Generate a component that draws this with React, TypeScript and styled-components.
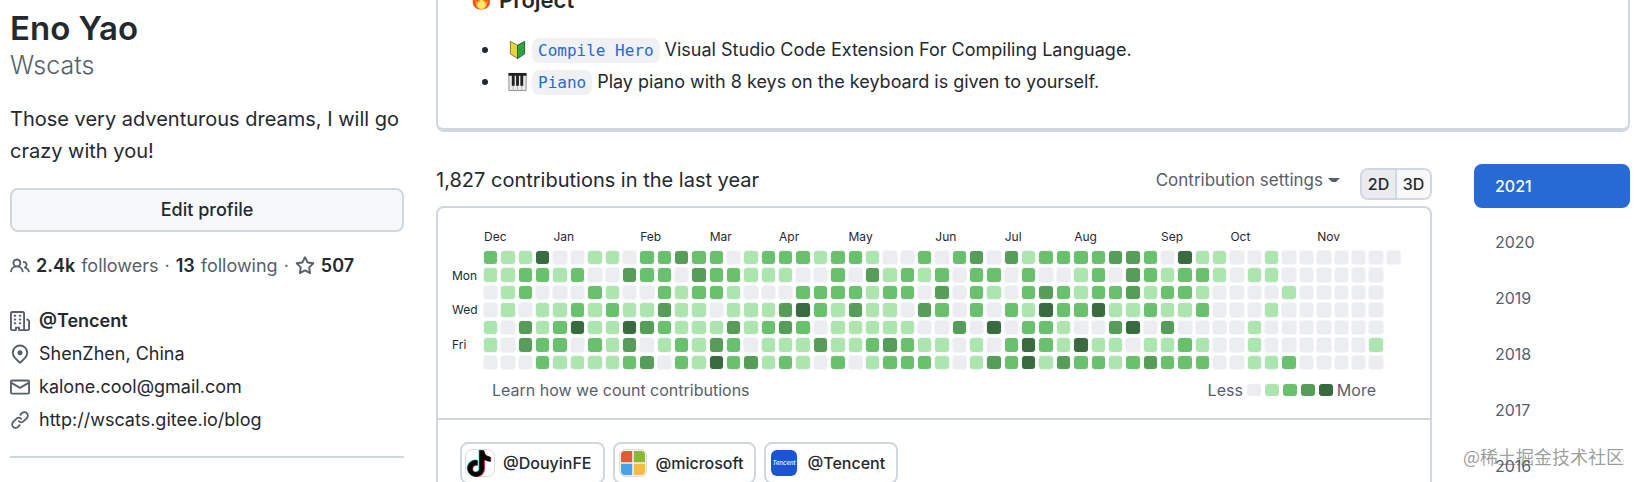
import React from "react";
import styled, { createGlobalStyle } from "styled-components";

const color = {
  text: "#24292f",
  muted: "#57606a",
  border: "#d0d7de",
  subtle: "#f6f8fa",
  blue: "#286ad3",
};

const LEVELS = ["#ebedf0", "#ace6ae", "#69c16e", "#559d58", "#386c3e"];

/* One string per weekday, one digit (activity level) per week */
const DAYS = [
  "21140011022322012221221002023031222233204110010000000",
  "1122120032203221110020312120220200120321221011000000",
  "0120002100212210002222122030210232122312210000100000",
  "0101121211311011134213110320202142241121120001000000",
  "1031241143211131232011111003040221003403000010000000",
  "1032202130121320111311232110102421411011210010000001",
  "0002111123021423121020122210132413221232220011200000",
];

const MONTHS: [string, number][] = [
  ["Dec", 1], ["Jan", 5], ["Feb", 10], ["Mar", 14], ["Apr", 18], ["May", 22],
  ["Jun", 27], ["Jul", 31], ["Aug", 35], ["Sep", 40], ["Oct", 44], ["Nov", 49],
];

const WEEKDAYS = ["", "Mon", "", "Wed", "", "Fri", ""];
const YEARS = [2021, 2020, 2019, 2018, 2017, 2016];

const GlobalStyle = createGlobalStyle`
  *, *::before, *::after { box-sizing: border-box; }
  body {
    margin: 0;
    background: #fff;
    color: ${color.text};
    font-family: Inter, "Liberation Sans", sans-serif;
    font-size: 18px;
    line-height: 32px;
  }
  h1, h2, h3, p, ul { margin: 0; padding: 0; }
  ul { list-style: none; }
  a { color: inherit; text-decoration: none; }
  button { font: inherit; color: inherit; cursor: pointer; }
`;

const Page = styled.div`
  position: relative;
  display: flex;
  gap: 32px;
  height: 100vh;
  padding: 0 10px;
  overflow: hidden;
`;

const Sidebar = styled.aside`
  flex: 0 0 394px;
  padding-top: 8px;
`;

const FullName = styled.h1`
  font-size: 33px;
  line-height: 40px;
  font-weight: 600;
`;

const Login = styled.p`
  font-size: 25px;
  line-height: 34px;
  font-weight: 300;
  color: ${color.muted};
`;

const Bio = styled.p`
  margin-top: 21px;
  font-size: 20px;
  line-height: 32px;
`;

const EditButton = styled.button`
  display: block;
  width: 100%;
  height: 44px;
  margin-top: 21px;
  padding: 0;
  border: 2px solid ${color.border};
  border-radius: 8px;
  background: ${color.subtle};
  font-weight: 500;
`;

const Stats = styled.div`
  display: flex;
  align-items: center;
  gap: 6px;
  margin-top: 18px;
  color: ${color.muted};
  white-space: nowrap;

  b { color: ${color.text}; font-weight: 600; }
`;

const StatLink = styled.a`
  display: flex;
  align-items: center;
  gap: 6px;
`;

const Details = styled.ul`
  display: grid;
  gap: 1px;
  margin-top: 23px;
  padding-bottom: 20px;
  border-bottom: 2px solid ${color.border};
`;

const Detail = styled.li<{ $strong?: boolean }>`
  display: flex;
  align-items: center;
  gap: 9px;
  font-weight: ${(p) => (p.$strong ? 600 : 400)};
`;

const Icon = styled.svg`
  flex: none;
  width: 20px;
  height: 20px;
  fill: ${color.muted};
`;

const Main = styled.main`
  flex: 1;
  min-width: 0;
`;

const Readme = styled.section`
  margin-top: -16px;
  border: 2px solid ${color.border};
  border-top: 0;
  border-radius: 0 0 8px 8px;
`;

const ReadmeBody = styled.div`
  padding: 0 32px 30px;
  border-bottom: 2px solid ${color.border};
  border-radius: 0 0 6px 6px;
`;

const ReadmeTitle = styled.h3`
  display: flex;
  align-items: center;
  gap: 8px;
  padding-left: 2px;
  font-size: 22px;
  line-height: 32px;
  font-weight: 600;
`;

const ProjectList = styled.ul`
  margin-top: 18px;
`;

const Project = styled.li`
  display: flex;
  align-items: center;
  gap: 5px;

  &::before {
    content: "";
    width: 6px;
    height: 6px;
    margin: 0 15px 0 12px;
    border-radius: 50%;
    background: ${color.text};
  }
`;

const CodeLink = styled.a`
  padding: 0 6px;
  border-radius: 8px;
  background: #eff1f3;
  color: ${color.blue};
  font-family: "DejaVu Sans Mono", monospace;
  font-size: 16px;
  line-height: 25px;
`;

const Emoji = styled.svg`
  flex: none;
  width: 19px;
  height: 20px;
`;

const Activity = styled.div`
  display: flex;
  gap: 42px;
  margin-top: 32px;
`;

const Contributions = styled.section`
  flex: 1;
  min-width: 0;
`;

const Header = styled.header`
  display: flex;
  align-items: center;
  justify-content: space-between;
  height: 42px;
  padding-bottom: 10px;
`;

const Heading = styled.h2`
  font-size: 20px;
  line-height: 32px;
  font-weight: 400;
`;

const Controls = styled.div`
  display: flex;
  align-items: center;
  gap: 20px;
`;

const SettingsButton = styled.button`
  display: flex;
  align-items: center;
  gap: 5px;
  padding: 0;
  border: 0;
  background: none;
  color: ${color.muted};
  font-size: 17px;
  line-height: 24px;
`;

const Toggle = styled.div`
  display: flex;
  height: 32px;
  margin-top: 8px;
  border: 2px solid ${color.border};
  border-radius: 8px;
  overflow: hidden;
`;

const ToggleButton = styled.button<{ $active?: boolean }>`
  width: 33px;
  padding: 0;
  border: 0;
  background: ${(p) => (p.$active ? "#ebecf0" : color.subtle)};
  font-size: 16px;
  line-height: 24px;
  font-weight: 500;

  & + & { width: 35px; border-left: 2px solid ${color.border}; }
`;

const Card = styled.div`
  border: 2px solid ${color.border};
  border-radius: 8px 8px 0 0;
`;

const Calendar = styled.div`
  display: grid;
  grid-template-columns: 32px 1fr;
  padding: 20px 30px 9px 14px;
`;

const MonthRow = styled.div`
  grid-column: 2;
  display: grid;
  grid-template-columns: repeat(53, minmax(0, 1fr));
  column-gap: 4px;
  height: 23px;
  font-size: 12px;
  line-height: 18px;
`;

const Month = styled.span<{ $week: number }>`
  grid-column-start: ${(p) => p.$week};
  grid-row: 1;
  white-space: nowrap;
`;

const WeekdayColumn = styled.div`
  display: grid;
  grid-template-rows: repeat(7, minmax(0, 1fr));
  align-items: center;
  row-gap: 4px;
  font-size: 12px;
  line-height: 13px;
`;

const DayGrid = styled.div`
  display: grid;
  grid-template-columns: repeat(53, minmax(0, 1fr));
  grid-template-rows: repeat(7, minmax(0, 1fr));
  gap: 4px;
  height: 118px;
`;

const Day = styled.span<{ $level: number; $row: number }>`
  grid-row: ${(p) => p.$row};
  border-radius: 3px;
  background: ${(p) => LEVELS[p.$level]};
  box-shadow: 0 0 0 1px #f4f5f6;
`;

const CalendarFooter = styled.div`
  display: flex;
  justify-content: space-between;
  padding: 0 54px 16px;
  color: ${color.muted};
  font-size: 16px;
  line-height: 24px;
`;

const Legend = styled.div`
  display: flex;
  align-items: center;
  gap: 4px;
`;

const Swatch = styled.span<{ $level: number }>`
  width: 14px;
  height: 12px;
  border-radius: 3px;
  background: ${(p) => LEVELS[p.$level]};
`;

const Orgs = styled.div`
  display: flex;
  gap: 8px;
  padding: 22px;
  border-top: 2px solid ${color.border};
`;

const OrgLink = styled.a`
  display: flex;
  align-items: center;
  gap: 8px;
  height: 42px;
  padding: 0 11px 0 3px;
  border: 2px solid ${color.border};
  border-radius: 8px;
  font-size: 16px;
  font-weight: 500;
`;

const OrgLogo = styled.svg`
  width: 30px;
  height: 30px;
`;

const Years = styled.nav`
  display: flex;
  flex: 0 0 156px;
  flex-direction: column;
  gap: 12px;
`;

const YearLink = styled.a<{ $active?: boolean }>`
  height: 44px;
  padding: 0 21px;
  border-radius: 8px;
  background: ${(p) => (p.$active ? color.blue : "transparent")};
  color: ${(p) => (p.$active ? "#fff" : color.muted)};
  font-size: 16px;
  line-height: 44px;
  font-weight: ${(p) => (p.$active ? 500 : 400)};
`;

const Watermark = styled.span`
  position: absolute;
  right: 16px;
  bottom: 14px;
  color: rgba(90, 90, 90, 0.6);
  font-family: "Noto Sans CJK SC", sans-serif;
  font-size: 18px;
  line-height: 24px;
`;

const ICONS = {
  people:
    "M5.5 3.5a2 2 0 100 4 2 2 0 000-4zM2 5.5a3.5 3.5 0 115.898 2.549 5.507 5.507 0 013.034 4.084.75.75 0 11-1.482.235 4.001 4.001 0 00-7.9 0 .75.75 0 01-1.482-.236A5.507 5.507 0 013.102 8.05 3.49 3.49 0 012 5.5zM11 4a.75.75 0 100 1.5 1.5 1.5 0 01.666 2.844.75.75 0 00-.416.672v.352a.75.75 0 00.574.73c1.2.289 2.162 1.2 2.522 2.372a.75.75 0 101.434-.44 5.01 5.01 0 00-2.56-3.012A3 3 0 0011 4z",
  star:
    "M8 .25a.75.75 0 01.673.418l1.882 3.815 4.21.612a.75.75 0 01.416 1.279l-3.046 2.97.719 4.192a.75.75 0 01-1.088.791L8 12.347l-3.766 1.98a.75.75 0 01-1.088-.79l.72-4.194L.818 6.374a.75.75 0 01.416-1.28l4.21-.611L7.327.668A.75.75 0 018 .25zm0 2.445L6.615 5.5a.75.75 0 01-.564.41l-3.097.45 2.24 2.184a.75.75 0 01.216.664l-.528 3.084 2.769-1.456a.75.75 0 01.698 0l2.77 1.456-.53-3.084a.75.75 0 01.216-.664l2.24-2.183-3.096-.45a.75.75 0 01-.564-.41L8 2.694v.001z",
  organization:
    "M1.5 14.25c0 .138.112.25.25.25H4v-1.25a.75.75 0 01.75-.75h2.5a.75.75 0 01.75.75v1.25h2.25a.25.25 0 00.25-.25V1.75a.25.25 0 00-.25-.25h-8.5a.25.25 0 00-.25.25v12.5zM1.75 16A1.75 1.75 0 010 14.25V1.75C0 .784.784 0 1.75 0h8.5C11.216 0 12 .784 12 1.75v12.5c0 .085-.006.168-.018.25h2.268a.25.25 0 00.25-.25V8.285a.25.25 0 00-.111-.208l-1.055-.703a.75.75 0 11.832-1.248l1.055.703c.487.325.779.871.779 1.456v5.965A1.75 1.75 0 0114.25 16h-3.5a.75.75 0 01-.197-.026c-.099.017-.2.026-.303.026h-3a.75.75 0 01-.75-.75V14h-1v1.25a.75.75 0 01-.75.75h-3zM3 3.75A.75.75 0 013.75 3h.5a.75.75 0 010 1.5h-.5A.75.75 0 013 3.75zM3.75 6a.75.75 0 000 1.5h.5a.75.75 0 000-1.5h-.5zM3 9.75A.75.75 0 013.75 9h.5a.75.75 0 010 1.5h-.5A.75.75 0 013 9.75zM7.75 9a.75.75 0 000 1.5h.5a.75.75 0 000-1.5h-.5zM7 6.75A.75.75 0 017.75 6h.5a.75.75 0 010 1.5h-.5A.75.75 0 017 6.75zM7.75 3a.75.75 0 000 1.5h.5a.75.75 0 000-1.5h-.5z",
  location:
    "M11.536 3.464a5 5 0 010 7.072L8 14.07l-3.536-3.535a5 5 0 117.072-7.072v.001zm1.06 8.132a6.5 6.5 0 10-9.192 0l3.535 3.536a1.5 1.5 0 002.122 0l3.535-3.536zM8 9a2 2 0 100-4 2 2 0 000 4z",
  mail:
    "M1.75 2A1.75 1.75 0 000 3.75v.736a.75.75 0 000 .027v7.737C0 13.216.784 14 1.75 14h12.5A1.75 1.75 0 0016 12.25v-8.5A1.75 1.75 0 0014.25 2H1.75zM14.5 4.07v-.32a.25.25 0 00-.25-.25H1.75a.25.25 0 00-.25.25v.32L8 7.88l6.5-3.81zm-13 1.74v6.441c0 .138.112.25.25.25h12.5a.25.25 0 00.25-.25V5.809L8.38 9.397a.75.75 0 01-.76 0L1.5 5.809v.001z",
  link:
    "M7.775 3.275a.75.75 0 001.06 1.06l1.25-1.25a2 2 0 112.83 2.83l-2.5 2.5a2 2 0 01-2.83 0 .75.75 0 00-1.06 1.06 3.5 3.5 0 004.95 0l2.5-2.5a3.5 3.5 0 00-4.95-4.95l-1.25 1.25zm-4.69 9.64a2 2 0 010-2.83l2.5-2.5a2 2 0 012.83 0 .75.75 0 001.06-1.06 3.5 3.5 0 00-4.95 0l-2.5 2.5a3.5 3.5 0 004.95 4.95l1.25-1.25a.75.75 0 00-1.06-1.06l-1.25 1.25a2 2 0 01-2.83 0z",
};

const Octicon = ({ name }: { name: keyof typeof ICONS }) => (
  <Icon viewBox="0 0 16 16" aria-hidden="true">
    <path fillRule="evenodd" d={ICONS[name]} />
  </Icon>
);

const Fire = () => (
  <Emoji viewBox="0 0 20 20" aria-hidden="true">
    <path fill="#f4511e" d="M10 0c1 4 6 5 7 9 1 0 1-1 1-2 2 6 1 13-8 13S-1 13 2 6c0 2 1 3 2 3C5 6 10 4 10 0z" />
    <path fill="#fb9a1c" d="M10 5c1 3 4 4 4 7 1 0 2-1 2-2 1 5-1 9.500-6 9.500S3 15 4 10c1 1 1 2 2 2 0-3 4-4 4-7z" />
    <path fill="#ffe96b" d="M10 8c0 3 4.500 4 4.500 7.500 0 2-2 4-4.500 4s-4.500-2-4.500-4C5.500 12 10 11 10 8z" />
  </Emoji>
);

const Beginner = () => (
  <Emoji viewBox="0 0 20 20" aria-hidden="true">
    <path fill="#e5d53a" stroke="#7a7a2a" strokeWidth="1" d="M2.500 1L10 5v14l-7.500-5z" />
    <path fill="#2fa344" stroke="#1d5c2a" strokeWidth="1" d="M17.500 1L10 5v14l7.500-5z" />
  </Emoji>
);

const Keys = () => (
  <Emoji viewBox="0 0 20 20" aria-hidden="true">
    <path fill="#ececec" stroke="#8c8c8c" strokeWidth="1" d="M1 1h18v18H1z" />
    <path stroke="#b4b4b4" strokeWidth="1" d="M5.500 13v6M10 13v6M14.500 13v6" />
    <path fill="#222" d="M.5.500h19v3H.5zM4 3h3v11H4zM8.500 3h3v11h-3zM13 3h3v11h-3z" />
  </Emoji>
);

const NOTE =
  "M12.525.02c1.31-.02 2.61-.01 3.91-.02.08 1.53.63 3.09 1.75 4.17 1.12 1.11 2.7 1.62 4.24 1.79v4.03c-1.44-.05-2.89-.35-4.2-.97-.57-.26-1.1-.59-1.62-.93-.01 2.92.01 5.84-.02 8.75-.08 1.4-.54 2.79-1.35 3.94-1.31 1.92-3.58 3.17-5.91 3.21-1.43.08-2.86-.31-4.08-1.03-2.02-1.19-3.44-3.37-3.65-5.71-.02-.5-.03-1-.01-1.49.18-1.9 1.12-3.72 2.58-4.96 1.66-1.44 3.98-2.13 6.15-1.72.02 1.48-.04 2.96-.04 4.44-.99-.32-2.15-.23-3.02.37-.63.41-1.11 1.04-1.36 1.75-.21.51-.15 1.07-.14 1.61.24 1.64 1.82 3.02 3.5 2.87 1.12-.01 2.19-.66 2.77-1.61.19-.33.4-.67.41-1.06.1-1.79.06-3.57.07-5.36.01-4.03-.01-8.05.02-12.07z";

const DouyinLogo = () => (
  <OrgLogo viewBox="0 0 30 30" aria-hidden="true">
    <rect x="0.500" y="1.500" width="29" height="27" rx="7" fill="#fff" stroke="#d8dadd" />
    <path fill="#3fe0dc" d={NOTE} transform="translate(0 2) scale(1.08)" />
    <path fill="#f7305a" d={NOTE} transform="translate(2 3) scale(1.08)" />
    <path fill="#050505" stroke="#050505" strokeWidth="0.500" d={NOTE} transform="translate(1 2.500) scale(1.08)" />
  </OrgLogo>
);

const MicrosoftLogo = () => (
  <OrgLogo viewBox="0 0 30 30" aria-hidden="true">
    <rect x="1.500" y="1.500" width="27" height="27" rx="6" fill="#f3f3f3" stroke="#d8dadd" />
    <path fill="#e25c33" d="M7 3h7.200v11.200H3V7a4 4 0 014-4z" />
    <path fill="#8ab734" d="M15.800 3H23a4 4 0 014 4v7.200H15.800z" />
    <path fill="#47a2ea" d="M3 15.800h11.200V27H7a4 4 0 01-4-4z" />
    <path fill="#f6bb42" d="M15.800 15.800H27V23a4 4 0 01-4 4h-7.200z" />
  </OrgLogo>
);

const TencentLogo = () => (
  <OrgLogo viewBox="0 0 30 30" aria-hidden="true">
    <rect x="2" y="2" width="26" height="26" rx="6" fill="#1c55d4" />
    <text x="15" y="17" textAnchor="middle" fontSize="6" fontWeight="500" fontStyle="italic" fill="#fff">
      Tencent
    </text>
  </OrgLogo>
);

export default function App() {
  return (
    <>
      <GlobalStyle />
      <Page>
        <Sidebar>
          <FullName>Eno Yao</FullName>
          <Login>Wscats</Login>
          <Bio>Those very adventurous dreams, I will go crazy with you!</Bio>
          <EditButton type="button">Edit profile</EditButton>
          <Stats>
            <StatLink href="#followers"><Octicon name="people" /><b>2.4k</b> followers</StatLink>
            <span>·</span>
            <StatLink href="#following"><b>13</b> following</StatLink>
            <span>·</span>
            <StatLink href="#stars"><Octicon name="star" /><b>507</b></StatLink>
          </Stats>
          <Details>
            <Detail $strong><Octicon name="organization" /><a href="#tencent">@Tencent</a></Detail>
            <Detail><Octicon name="location" />ShenZhen, China</Detail>
            <Detail><Octicon name="mail" /><a href="#mail">kalone.cool@gmail.com</a></Detail>
            <Detail><Octicon name="link" /><a href="#blog">http://wscats.gitee.io/blog</a></Detail>
          </Details>
        </Sidebar>

        <Main>
          <Readme>
            <ReadmeBody>
              <ReadmeTitle><Fire />Project</ReadmeTitle>
              <ProjectList>
                <Project>
                  <Beginner />
                  <CodeLink href="#compile-hero">Compile Hero</CodeLink>
                  <span>Visual Studio Code Extension For Compiling Language.</span>
                </Project>
                <Project>
                  <Keys />
                  <CodeLink href="#piano">Piano</CodeLink>
                  <span>Play piano with 8 keys on the keyboard is given to yourself.</span>
                </Project>
              </ProjectList>
            </ReadmeBody>
          </Readme>

          <Activity>
            <Contributions>
              <Header>
                <Heading>1,827 contributions in the last year</Heading>
                <Controls>
                  <SettingsButton type="button">
                    Contribution settings
                    <svg width="12" height="6" viewBox="0 0 12 6" aria-hidden="true">
                      <path d="M0 1h12L8 5H4z" fill={color.muted} />
                    </svg>
                  </SettingsButton>
                  <Toggle>
                    <ToggleButton type="button" $active>2D</ToggleButton>
                    <ToggleButton type="button">3D</ToggleButton>
                  </Toggle>
                </Controls>
              </Header>
              <Card>
                <Calendar>
                  <MonthRow>
                    {MONTHS.map(([name, week]) => (
                      <Month key={name} $week={week}>{name}</Month>
                    ))}
                  </MonthRow>
                  <WeekdayColumn>
                    {WEEKDAYS.map((day, i) => <span key={i}>{day}</span>)}
                  </WeekdayColumn>
                  <DayGrid>
                    {DAYS.map((levels, row) =>
                      levels.split("").map((level, week) => (
                        <Day key={`${row}-${week}`} $row={row + 1} $level={Number(level)} />
                      ))
                    )}
                  </DayGrid>
                </Calendar>
                <CalendarFooter>
                  <a href="#how">Learn how we count contributions</a>
                  <Legend>
                    Less
                    {LEVELS.map((_, level) => <Swatch key={level} $level={level} />)}
                    More
                  </Legend>
                </CalendarFooter>
                <Orgs>
                  <OrgLink href="#douyin"><DouyinLogo />@DouyinFE</OrgLink>
                  <OrgLink href="#microsoft"><MicrosoftLogo />@microsoft</OrgLink>
                  <OrgLink href="#org-tencent"><TencentLogo />@Tencent</OrgLink>
                </Orgs>
              </Card>
            </Contributions>
            <Years>
              {YEARS.map((year) => (
                <YearLink key={year} href={`#${year}`} $active={year === 2021}>{year}</YearLink>
              ))}
            </Years>
          </Activity>
        </Main>
        <Watermark>@稀土掘金技术社区</Watermark>
      </Page>
    </>
  );
}
